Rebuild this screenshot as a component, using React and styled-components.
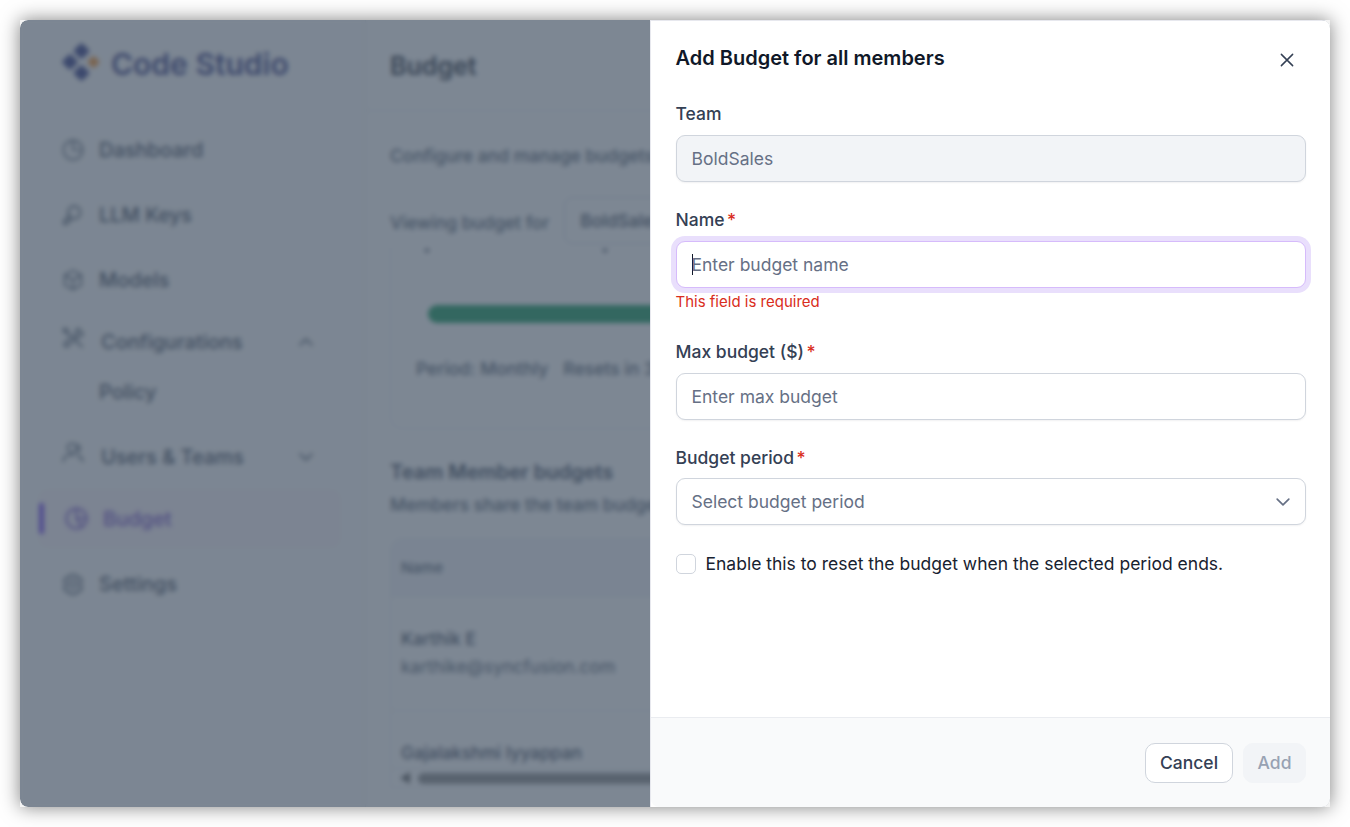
import React from "react";
import styled, { createGlobalStyle, css } from "styled-components";

const GlobalStyle = createGlobalStyle`
  *, *::before, *::after { box-sizing: border-box; }
  body {
    margin: 0;
    background: #fff;
    color: #344054;
    font-family: Inter, "Liberation Sans", sans-serif;
    overflow: hidden;
  }
  button, input { font-family: inherit; }
`;

const Stage = styled.div`
  width: 1350px;
  height: 827px;
  padding: 20px;
`;

const Shadow = styled.div`
  width: 1310px;
  height: 787px;
  background: #f4f4f4;
  box-shadow: 0 0 18px rgba(0, 0, 0, 0.5);
`;

const Window = styled.div`
  position: relative;
  height: 100%;
  border-radius: 8px;
  overflow: hidden;
  background: #fff;
`;

const Page = styled.div`
  display: flex;
  height: 100%;
`;

const Sidebar = styled.aside`
  width: 346px;
  flex: none;
  border-right: 1px solid #eaecf0;
  background: #fcfcfd;
`;

const Brand = styled.div`
  display: flex;
  align-items: center;
  gap: 11.5px;
  height: 97px;
  padding: 0 0 10px 41.5px;
  color: #2a2f7c;
  font-size: 30px;
  font-weight: 600;
  svg { margin-top: -3px; }
`;

const NavItem = styled.div`
  display: flex;
  align-items: center;
  gap: ${(p) => p.$gap || 15}px;
  height: ${(p) => p.$height || 65}px;
  margin-top: ${(p) => p.$top || 0}px;
  padding: 0 49px 0 ${(p) => p.$indent || 42}px;
  font-size: 20px;
  font-weight: 500;
  color: #344054;
  > svg { flex: none; color: #475467; }
  ${(p) => p.$raised && css`> svg:first-child { margin-top: -8px; }`}
`;

const ActiveItem = styled(NavItem)`
  width: 301px;
  margin-left: 19px;
  padding: 0;
  border-radius: 8px;
  background: #fbf3fb;
  color: #6941c6;
  > svg { color: #6941c6; margin-left: 21px; }
`;

const Marker = styled.span`
  width: 5px;
  height: 31px;
  margin-right: -15px;
  border-radius: 2px;
  background: #6938ef;
`;

const Grow = styled.span`
  flex: 1;
`;

const Content = styled.main`
  width: 964px;
  flex: none;
`;

const PageHeader = styled.header`
  display: flex;
  align-items: center;
  height: 91px;
  padding: 2px 0 0 24px;
  border-bottom: 1px solid #eaecf0;
  color: #182230;
  font-size: 25px;
  font-weight: 600;
`;

const PageBody = styled.div`
  padding: 32px 24px 0;
  white-space: nowrap;
`;

const Text = styled.p`
  margin: 0;
  line-height: 26px;
  font-size: ${(p) => p.$size || 17.5}px;
  font-weight: ${(p) => p.$weight || 400};
  color: ${(p) => p.$color || "#475467"};
`;

const FilterRow = styled.div`
  display: flex;
  align-items: center;
  gap: 15px;
  height: 48px;
  margin-top: 29px;
  padding-top: 1px;
`;

const TeamSelect = styled.div`
  display: flex;
  align-items: center;
  width: 300px;
  height: 47px;
  margin-top: -4px;
  padding: 0 15px;
  border: 1px solid #d0d5dd;
  border-radius: 8px;
  font-size: 17.5px;
  font-weight: 500;
`;

const UsageCard = styled.section`
  height: 183px;
  padding: 0 25px;
  border: 1px solid #eaecf0;
  border-top: 0;
  border-radius: 0 0 12px 12px;
`;

const ScrolledText = styled.div`
  display: flex;
  gap: 174px;
  height: 59px;
  padding: 3px 9px 0;
  span { width: 4px; height: 3px; background: #344054; }
`;

const Progress = styled.div`
  height: 18px;
  margin: 0 0 33px 12px;
  border-radius: 9px;
  background: #079455;
`;

const Meta = styled.div`
  display: flex;
  gap: 15px;
`;

const SectionHead = styled.div`
  display: flex;
  flex-direction: column;
  gap: 7px;
  padding: 30px 0 20px;
`;

const Table = styled.div`
  border: 1px solid #eaecf0;
  border-radius: 12px 12px 0 0;
  overflow: hidden;
`;

const TableHead = styled.div`
  height: 58px;
  padding: 16px 10px;
  border-bottom: 1px solid #eaecf0;
  background: #f5f6fb;
`;

const TableRow = styled.div`
  display: flex;
  flex-direction: column;
  gap: 2px;
  height: ${(p) => p.$height}px;
  padding: 29px 10px 0;
  border-bottom: 1px solid #eaecf0;
`;

const ScrollTrack = styled.div`
  display: flex;
  align-items: center;
  gap: 8px;
  height: 18px;
  padding-left: 9px;
`;

const ScrollArrow = styled.span`
  border: 6px solid transparent;
  border-right: 10px solid #555;
  border-left: 0;
`;

const ScrollThumb = styled.span`
  width: 600px;
  height: 11px;
  border-radius: 6px;
  background: #858585;
`;

const Scrim = styled.div`
  position: absolute;
  inset: 0;
  background: rgba(70, 84, 101, 0.7);
  backdrop-filter: blur(2.4px);
`;

const Drawer = styled.section`
  position: absolute;
  top: 0;
  right: 0;
  bottom: 0;
  display: flex;
  flex-direction: column;
  width: 680px;
  border: solid #e7e8ee;
  border-width: 1px 0 0 1px;
  background: #fff;
`;

const DrawerHeader = styled.header`
  display: flex;
  align-items: center;
  justify-content: space-between;
  height: 75px;
  padding: 0 34px 0 24.5px;
  h2 {
    margin: -2px 0 0;
    font-size: 20px;
    line-height: 30px;
    font-weight: 600;
    color: #101828;
  }
`;

const CloseButton = styled.button`
  display: flex;
  margin-top: 3px;
  padding: 0;
  border: 0;
  background: none;
  color: #344054;
`;

const Form = styled.form`
  flex: 1;
  padding: 4px 24px 0 25px;
`;

const Field = styled.div`
  margin-bottom: 24px;
`;

const Label = styled.label`
  display: flex;
  gap: 2.5px;
  height: 28px;
  margin-bottom: ${(p) => p.$space || 7}px;
  margin-left: -0.5px;
  font-size: 17.5px;
  line-height: 28px;
  font-weight: 500;
  color: #344054;
  span { color: #d92d20; }
`;

const control = css`
  display: flex;
  align-items: center;
  justify-content: space-between;
  width: 100%;
  height: 47px;
  padding: 0 12px 0 14.5px;
  border: 1px solid #d0d5dd;
  border-radius: 9px;
  background: #fff;
  box-shadow: 0 1px 2px rgba(16, 24, 40, 0.06);
  font-size: 17.5px;
  color: #667085;
`;

const ReadOnly = styled.div`
  ${control}
  background: #f2f4f7;
`;

const Input = styled.div`
  ${control}
  justify-content: flex-start;
  ${(p) => p.$focused && css`
    border-color: #d6bbfb;
    box-shadow: 0 0 0 5px #e9dffc;
  `}
`;

const Caret = styled.span`
  width: 1px;
  height: 21px;
  margin-right: -1px;
  background: #101828;
`;

const Select = styled.div`
  ${control}
`;

const ErrorText = styled.p`
  margin: 2px 0 25px -0.5px;
  font-size: 15px;
  line-height: 23px;
  color: #d92d20;
`;

const CheckRow = styled.label`
  display: flex;
  align-items: center;
  gap: 9.5px;
  margin-top: 26px;
  font-size: 17.5px;
  line-height: 26px;
  color: #182230;
`;

const CheckBox = styled.span`
  width: 20px;
  height: 20px;
  border: 1px solid #d0d5dd;
  border-radius: 5px;
`;

const DrawerFooter = styled.footer`
  display: flex;
  justify-content: flex-end;
  gap: 10px;
  height: 90px;
  padding: 25px 24px 0;
  border-top: 1px solid #eaecf0;
  border-radius: 0 0 8px 8px;
  background: #f9fafb;
`;

const Button = styled.button`
  width: ${(p) => p.$width}px;
  height: 40px;
  padding: 0 0 2px;
  border: 1px solid ${(p) => (p.disabled ? "#f2f4f7" : "#d0d5dd")};
  border-radius: 10px;
  background: ${(p) => (p.disabled ? "#f2f4f7" : "#fff")};
  color: ${(p) => (p.disabled ? "#98a2b3" : "#344054")};
  font-size: 17.5px;
  font-weight: 500;
`;

const Icon = ({ size = 22, width = 1.8, children }) => (
  <svg width={size} height={size} viewBox="0 0 24 24" fill="none" stroke="currentColor"
    strokeWidth={width} strokeLinecap="round" strokeLinejoin="round">{children}</svg>
);

const Pie = ({ size }) => (
  <Icon size={size} width={2.1}><circle cx="12" cy="12" r="10.500" /><path d="M12 2v10l5 8M12 12h9" /></Icon>
);

const Clock = () => (
  <Icon><circle cx="12" cy="12" r="10.500" /><path d="M12 2v10h9" /></Icon>
);

const Key = () => (
  <Icon width={2}><path d="M9 14.500A6.800 6.800 0 1 1 14 16h-3l-2 2H7v2l-2 2H2v-3.500L9 12" /></Icon>
);

const Cube = () => (
  <Icon><path d="M12 1.500 21 6.500v11l-9 5-9-5v-11zM3.500 7 12 12l8.500-5M12 12v10" /></Icon>
);

const Tools = () => (
  <Icon width={2}><path d="m6 6 5 5M6 6H3L1.500 3 3 1.500 6 3zM13 11l3-3-1-4 3.500-2.500 1 4 3.500 1a6 6 0 0 1-6.500 4.500L5 22l-3-3 7-7M15 15l7 6.500" /></Icon>
);

const Users = () => (
  <Icon width={2}><circle cx="11" cy="6.500" r="5" /><path d="M1.500 21c0-5 4-7 8-7h3M17 3a4.500 4.500 0 0 1 0 8M17 15c3 .5 5 3 5.500 6" /></Icon>
);

const Gear = () => (
  <Icon width={2}><path d="m9 2-1 3-3-.5-3 4 2 3v2l-2 3 3 4 3-.5 1 3h6l1-3 3 .5 3-4-2-3v-2l2-3-3-4-3 .5-1-3z" /><circle cx="12" cy="12" r="4" /></Icon>
);

const Chevron = ({ up, size = 20, width = 2 }) => (
  <Icon size={size} width={width}><path d={up ? "m5 15.500 7-7 7 7" : "m5 8.500 7 7 7-7"} /></Icon>
);

const Logo = () => (
  <svg width="38" height="40" viewBox="0 0 38 40">
    <g fill="#262f80">
      <rect x="13.500" y="3" width="12" height="12" rx="2" transform="rotate(45 19.500 9)" />
      <rect x="2" y="14" width="12" height="12" rx="2" transform="rotate(45 8 20)" />
      <rect x="13.500" y="25" width="12" height="12" rx="2" transform="rotate(45 19.500 31)" />
    </g>
    <rect x="27" y="15.500" width="9" height="9" rx="1" fill="#f58a1f" transform="rotate(45 31.500 20)" />
  </svg>
);

export default function App() {
  return (
    <Stage>
      <GlobalStyle />
      <Shadow>
        <Window>
          <Page>
            <Sidebar>
              <Brand><Logo />Code Studio</Brand>
              <NavItem><Clock />Dashboard</NavItem>
              <NavItem><Key />LLM Keys</NavItem>
              <NavItem><Cube />Models</NavItem>
              <NavItem $height={59} $gap={17} $raised><Tools />Configurations<Grow /><Chevron up width={2.4} /></NavItem>
              <NavItem $height={41} $indent={79}>Policy</NavItem>
              <NavItem $top={12} $gap={17} $raised><Users />Users &amp; Teams<Grow /><Chevron width={2.4} /></NavItem>
              <ActiveItem $height={57} $top={1}><Marker /><Pie size={23} />Budget</ActiveItem>
              <NavItem $top={4}><Gear />Settings</NavItem>
            </Sidebar>
            <Content>
              <PageHeader>Budget</PageHeader>
              <PageBody>
                <Text $weight={500}>Configure and manage budgets</Text>
                <FilterRow>
                  <Text $weight={500}>Viewing budget for</Text>
                  <TeamSelect>BoldSales</TeamSelect>
                </FilterRow>
                <UsageCard>
                  <ScrolledText><span /><span /></ScrolledText>
                  <Progress />
                  <Meta>
                    <Text $weight={500}>Period: Monthly</Text>
                    <Text $weight={500}>Resets in 30</Text>
                  </Meta>
                </UsageCard>
                <SectionHead>
                  <Text $size={20} $weight={600} $color="#344054">Team Member budgets</Text>
                  <Text $weight={500}>Members share the team budget</Text>
                </SectionHead>
                <Table>
                  <TableHead><Text $size={15} $weight={500}>Name</Text></TableHead>
                  <TableRow $height={114}>
                    <Text $weight={500} $color="#344054">Karthik E</Text>
                    <Text>karthike@syncfusion.com</Text>
                  </TableRow>
                  <TableRow $height={58}>
                    <Text $size={17.3} $weight={500} $color="#344054">Gajalakshmi Iyyappan</Text>
                  </TableRow>
                  <ScrollTrack><ScrollArrow /><ScrollThumb /></ScrollTrack>
                </Table>
              </PageBody>
            </Content>
          </Page>
          <Scrim />
          <Drawer>
            <DrawerHeader>
              <h2>Add Budget for all members</h2>
              <CloseButton type="button" aria-label="Close">
                <Icon size={18} width={2}><path d="m4.500 4.500 15 15M19.500 4.500l-15 15" /></Icon>
              </CloseButton>
            </DrawerHeader>
            <Form>
              <Field>
                <Label>Team</Label>
                <ReadOnly>BoldSales</ReadOnly>
              </Field>
              <Field>
                <Label>Name<span>*</span></Label>
                <Input $focused><Caret />Enter budget name</Input>
                <ErrorText>This field is required</ErrorText>
              </Field>
              <Field>
                <Label>Max budget ($)<span>*</span></Label>
                <Input>Enter max budget</Input>
              </Field>
              <Field>
                <Label $space={6}>Budget period<span>*</span></Label>
                <Select>Select budget period<Chevron size={20} /></Select>
              </Field>
              <CheckRow><CheckBox />Enable this to reset the budget when the selected period ends.</CheckRow>
            </Form>
            <DrawerFooter>
              <Button type="button" $width={88}>Cancel</Button>
              <Button type="button" $width={63} disabled>Add</Button>
            </DrawerFooter>
          </Drawer>
        </Window>
      </Shadow>
    </Stage>
  );
}
